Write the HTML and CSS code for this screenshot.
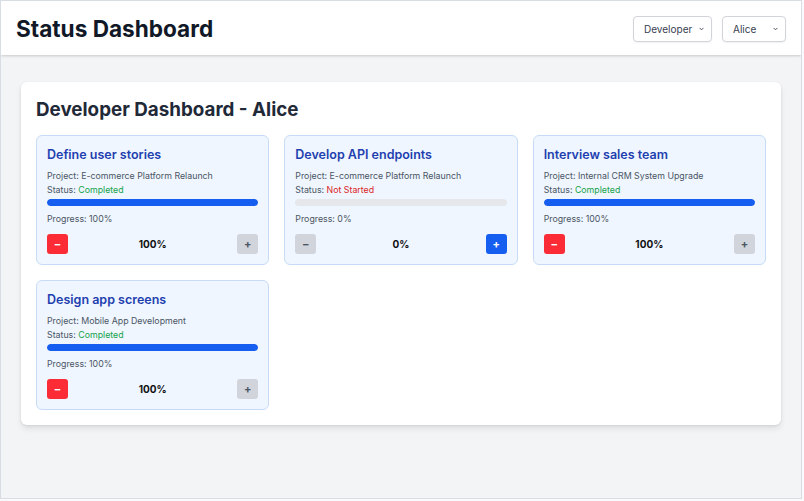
FILE: index.html
```html
<!DOCTYPE html>
<html>
<head>
<meta charset="utf-8">
<link rel="stylesheet" href="styles.css">
</head>
<body>
<div class="app">
  <header class="topbar">
    <h1 class="app-title">Status Dashboard</h1>
    <div class="controls">
      <div class="select sel-role"><span>Developer</span><svg class="chev" viewBox="0 0 6 4" width="5" height="4"><path d="M0.7 0.7l2.3 2.3 2.3-2.3" fill="none" stroke="#4b5563" stroke-width="1.2"/></svg></div>
      <div class="select sel-user"><span>Alice</span><svg class="chev" viewBox="0 0 6 4" width="5" height="4"><path d="M0.7 0.7l2.3 2.3 2.3-2.3" fill="none" stroke="#4b5563" stroke-width="1.2"/></svg></div>
    </div>
  </header>
  <main class="main">
    <section class="panel">
      <h2 class="panel-title">Developer Dashboard - Alice</h2>
      <div class="grid">
        <div class="card">
          <h3 class="card-title">Define user stories</h3>
          <p class="meta">Project: E-commerce Platform Relaunch</p>
          <p class="meta">Status: <span class="ok">Completed</span></p>
          <div class="track"><div class="fill" style="width:100%"></div></div>
          <p class="meta prog">Progress: 100%</p>
          <div class="actions">
            <button class="btn red">−</button>
            <span class="val">100%</span>
            <button class="btn gray">+</button>
          </div>
        </div>
        <div class="card">
          <h3 class="card-title">Develop API endpoints</h3>
          <p class="meta">Project: E-commerce Platform Relaunch</p>
          <p class="meta">Status: <span class="bad">Not Started</span></p>
          <div class="track"><div class="fill" style="width:0%"></div></div>
          <p class="meta prog">Progress: 0%</p>
          <div class="actions">
            <button class="btn gray">−</button>
            <span class="val">0%</span>
            <button class="btn blue">+</button>
          </div>
        </div>
        <div class="card">
          <h3 class="card-title">Interview sales team</h3>
          <p class="meta">Project: Internal CRM System Upgrade</p>
          <p class="meta">Status: <span class="ok">Completed</span></p>
          <div class="track"><div class="fill" style="width:100%"></div></div>
          <p class="meta prog">Progress: 100%</p>
          <div class="actions">
            <button class="btn red">−</button>
            <span class="val">100%</span>
            <button class="btn gray">+</button>
          </div>
        </div>
        <div class="card">
          <h3 class="card-title">Design app screens</h3>
          <p class="meta">Project: Mobile App Development</p>
          <p class="meta">Status: <span class="ok">Completed</span></p>
          <div class="track"><div class="fill" style="width:100%"></div></div>
          <p class="meta prog">Progress: 100%</p>
          <div class="actions">
            <button class="btn red">−</button>
            <span class="val">100%</span>
            <button class="btn gray">+</button>
          </div>
        </div>
      </div>
    </section>
  </main>
</div>
</body>
</html>
```

FILE: styles.css
```css
* { box-sizing: border-box; }
html, body { margin: 0; padding: 0; background: #f9fafb; }
body { font-family: Inter, "Noto Sans", sans-serif; }
.app {
  width: 802px;
  height: 499px;
  border: 1px solid #d8dce3;
  background: #f3f4f6;
  display: flex;
  flex-direction: column;
  overflow: hidden;
}
.topbar {
  height: 54px;
  flex: none;
  background: #fff;
  display: flex;
  align-items: center;
  justify-content: space-between;
  padding: 0 15px;
  box-shadow: 0 1px 3px rgba(0,0,0,0.12), 0 1px 2px rgba(0,0,0,0.06);
  position: relative;
  z-index: 1;
}
.app-title {
  margin: 0;
  font-size: 22.6px;
  font-weight: 700;
  color: #111827;
}
.controls { display: flex; gap: 10px; margin-top: 1px; }
.select {
  height: 26px;
  border: 1px solid #d1d5db;
  border-radius: 4px;
  background: #fff;
  box-shadow: 0 1px 2px rgba(0,0,0,0.06);
  display: flex;
  align-items: center;
  justify-content: space-between;
  padding: 0 7px 0 10px;
  font-size: 10px;
  color: #374151;
}
.sel-role { width: 79px; }
.sel-user { width: 64px; }
.main {
  flex: 1;
  padding: 27px 20px 0 20px;
}
.panel {
  background: #fff;
  border-radius: 6px;
  box-shadow: 0 4px 6px rgba(0,0,0,0.08), 0 1px 3px rgba(0,0,0,0.08);
  padding: 15px 15px 15px 15px;
}
.panel-title {
  margin: 0 0 12px 0;
  font-size: 18.8px;
  font-weight: 700;
  color: #1f2937;
  line-height: 26px;
}
.grid {
  display: grid;
  grid-template-columns: repeat(3, 1fr);
  gap: 15px 15px;
}
.card {
  background: #eff6ff;
  border: 1px solid #c7dbf7;
  border-radius: 6px;
  padding: 10px;
  height: 130px;
}
.card-title {
  margin: 0 0 7px 0;
  font-size: 12.5px;
  font-weight: 600;
  color: #1e40af;
  line-height: 17px;
}
.meta {
  margin: 0 0 2px 0;
  font-size: 8.8px;
  line-height: 12px;
  color: #4b5563;
}
.ok { color: #16a34a; }
.bad { color: #dc2626; }
.track {
  height: 7px;
  border-radius: 4px;
  background: #e5e7eb;
  margin: 3px 0 7px 0;
  overflow: hidden;
}
.fill { height: 100%; background: #155eef; border-radius: 4px; }
.meta.prog { margin: 0 0 9px 0; }
.actions {
  display: flex;
  align-items: center;
  justify-content: space-between;
}
.btn {
  width: 21px;
  height: 20px;
  border: none;
  border-radius: 3px;
  padding: 0;
  font-family: inherit;
  font-size: 11px;
  font-weight: 700;
  line-height: 20px;
  display: flex;
  align-items: center;
  justify-content: center;
}
.red { background: #fb2c36; color: #fff; }
.gray { background: #d1d5db; color: #4b5563; }
.blue { background: #155eef; color: #fff; }
.val { font-size: 10px; font-weight: 700; color: #111; }
```
